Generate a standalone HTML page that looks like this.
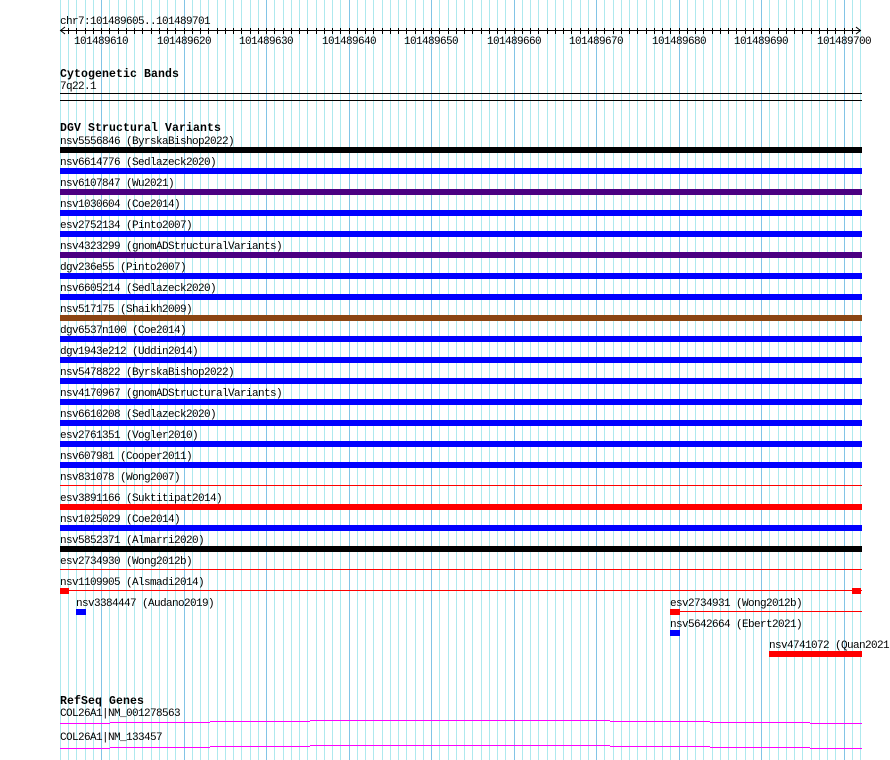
<!DOCTYPE html>
<html><head><meta charset="utf-8"><style>
html,body{margin:0;padding:0;background:#fff;width:890px;height:760px;overflow:hidden}
svg{display:block}
text{font-family:"Liberation Mono",monospace;font-size:11px;letter-spacing:-0.6px;fill:#000}
.b{font-weight:bold;font-size:11.5px;letter-spacing:0.1px}
</style></head><body>
<svg width="890" height="760" viewBox="0 0 890 760" shape-rendering="crispEdges">
<path stroke="#aee9ee" stroke-width="1" fill="none" d="M60.5 0v760M68.5 0v760M76.5 0v760M85.5 0v760M93.5 0v760M109.5 0v760M118.5 0v760M126.5 0v760M134.5 0v760M142.5 0v760M151.5 0v760M159.5 0v760M167.5 0v760M175.5 0v760M192.5 0v760M200.5 0v760M208.5 0v760M217.5 0v760M225.5 0v760M233.5 0v760M241.5 0v760M250.5 0v760M258.5 0v760M274.5 0v760M283.5 0v760M291.5 0v760M299.5 0v760M307.5 0v760M316.5 0v760M324.5 0v760M332.5 0v760M340.5 0v760M357.5 0v760M365.5 0v760M373.5 0v760M382.5 0v760M390.5 0v760M398.5 0v760M406.5 0v760M415.5 0v760M423.5 0v760M439.5 0v760M448.5 0v760M456.5 0v760M464.5 0v760M472.5 0v760M481.5 0v760M489.5 0v760M497.5 0v760M505.5 0v760M522.5 0v760M530.5 0v760M538.5 0v760M547.5 0v760M555.5 0v760M563.5 0v760M571.5 0v760M580.5 0v760M588.5 0v760M604.5 0v760M613.5 0v760M621.5 0v760M629.5 0v760M637.5 0v760M646.5 0v760M654.5 0v760M662.5 0v760M670.5 0v760M687.5 0v760M695.5 0v760M703.5 0v760M712.5 0v760M720.5 0v760M728.5 0v760M736.5 0v760M745.5 0v760M753.5 0v760M769.5 0v760M778.5 0v760M786.5 0v760M794.5 0v760M802.5 0v760M811.5 0v760M819.5 0v760M827.5 0v760M835.5 0v760M852.5 0v760M860.5 0v760"/>
<path stroke="#82c4e6" stroke-width="1" fill="none" d="M101.5 0v760M184.5 0v760M266.5 0v760M349.5 0v760M431.5 0v760M514.5 0v760M596.5 0v760M679.5 0v760M761.5 0v760M844.5 0v760"/>

<text x="60" y="24">chr7:101489605..101489701</text>
<rect x="60" y="30" width="801" height="1" fill="#000"/>
<path stroke="#000" stroke-width="1" fill="none" d="M68.5 28v6M76.5 28v6M85.5 28v6M93.5 28v6M101.5 28v6M109.5 28v6M118.5 28v6M126.5 28v6M134.5 28v6M142.5 28v6M151.5 28v6M159.5 28v6M167.5 28v6M175.5 28v6M184.5 28v6M192.5 28v6M200.5 28v6M208.5 28v6M217.5 28v6M225.5 28v6M233.5 28v6M241.5 28v6M250.5 28v6M258.5 28v6M266.5 28v6M274.5 28v6M283.5 28v6M291.5 28v6M299.5 28v6M307.5 28v6M316.5 28v6M324.5 28v6M332.5 28v6M340.5 28v6M349.5 28v6M357.5 28v6M365.5 28v6M373.5 28v6M382.5 28v6M390.5 28v6M398.5 28v6M406.5 28v6M415.5 28v6M423.5 28v6M431.5 28v6M439.5 28v6M448.5 28v6M456.5 28v6M464.5 28v6M472.5 28v6M481.5 28v6M489.5 28v6M497.5 28v6M505.5 28v6M514.5 28v6M522.5 28v6M530.5 28v6M538.5 28v6M547.5 28v6M555.5 28v6M563.5 28v6M571.5 28v6M580.5 28v6M588.5 28v6M596.5 28v6M604.5 28v6M613.5 28v6M621.5 28v6M629.5 28v6M637.5 28v6M646.5 28v6M654.5 28v6M662.5 28v6M670.5 28v6M679.5 28v6M687.5 28v6M695.5 28v6M703.5 28v6M712.5 28v6M720.5 28v6M728.5 28v6M736.5 28v6M745.5 28v6M753.5 28v6M761.5 28v6M769.5 28v6M778.5 28v6M786.5 28v6M794.5 28v6M802.5 28v6M811.5 28v6M819.5 28v6M827.5 28v6M835.5 28v6M844.5 28v6M852.5 28v6"/>
<path d="M65 27 L60.5 30.5 L65 34 M856 27 L860.5 30.5 L856 34" stroke="#000" fill="none" shape-rendering="auto"/>
<g>
<text x="74" y="44">101489610</text>
<text x="157" y="44">101489620</text>
<text x="239" y="44">101489630</text>
<text x="322" y="44">101489640</text>
<text x="404" y="44">101489650</text>
<text x="487" y="44">101489660</text>
<text x="569" y="44">101489670</text>
<text x="652" y="44">101489680</text>
<text x="734" y="44">101489690</text>
<text x="817" y="44">101489700</text>
</g>

<text class="b" x="60" y="77">Cytogenetic Bands</text>
<text x="60" y="89">7q22.1</text>
<rect x="60" y="93" width="802" height="1" fill="#000"/>
<rect x="60" y="100" width="802" height="1" fill="#000"/>

<text class="b" x="60" y="131">DGV Structural Variants</text>
<text x="60" y="144">nsv5556846 (ByrskaBishop2022)</text><rect x="60" y="147" width="802" height="6" fill="#000"/>
<text x="60" y="165">nsv6614776 (Sedlazeck2020)</text><rect x="60" y="168" width="802" height="6" fill="#0000ff"/>
<text x="60" y="186">nsv6107847 (Wu2021)</text><rect x="60" y="189" width="802" height="6" fill="#4b0082"/>
<text x="60" y="207">nsv1030604 (Coe2014)</text><rect x="60" y="210" width="802" height="6" fill="#0000ff"/>
<text x="60" y="228">esv2752134 (Pinto2007)</text><rect x="60" y="231" width="802" height="6" fill="#0000ff"/>
<text x="60" y="249">nsv4323299 (gnomADStructuralVariants)</text><rect x="60" y="252" width="802" height="6" fill="#4b0082"/>
<text x="60" y="270">dgv236e55 (Pinto2007)</text><rect x="60" y="273" width="802" height="6" fill="#0000ff"/>
<text x="60" y="291">nsv6605214 (Sedlazeck2020)</text><rect x="60" y="294" width="802" height="6" fill="#0000ff"/>
<text x="60" y="312">nsv517175 (Shaikh2009)</text><rect x="60" y="315" width="802" height="6" fill="#8b4513"/>
<text x="60" y="333">dgv6537n100 (Coe2014)</text><rect x="60" y="336" width="802" height="6" fill="#0000ff"/>
<text x="60" y="354">dgv1943e212 (Uddin2014)</text><rect x="60" y="357" width="802" height="6" fill="#0000ff"/>
<text x="60" y="375">nsv5478822 (ByrskaBishop2022)</text><rect x="60" y="378" width="802" height="6" fill="#0000ff"/>
<text x="60" y="396">nsv4170967 (gnomADStructuralVariants)</text><rect x="60" y="399" width="802" height="6" fill="#0000ff"/>
<text x="60" y="417">nsv6610208 (Sedlazeck2020)</text><rect x="60" y="420" width="802" height="6" fill="#0000ff"/>
<text x="60" y="438">esv2761351 (Vogler2010)</text><rect x="60" y="441" width="802" height="6" fill="#0000ff"/>
<text x="60" y="459">nsv607981 (Cooper2011)</text><rect x="60" y="462" width="802" height="6" fill="#0000ff"/>
<text x="60" y="480">nsv831078 (Wong2007)</text><rect x="60" y="485" width="802" height="1" fill="#ff0000"/>
<text x="60" y="501">esv3891166 (Suktitipat2014)</text><rect x="60" y="504" width="802" height="6" fill="#ff0000"/>
<text x="60" y="522">nsv1025029 (Coe2014)</text><rect x="60" y="525" width="802" height="6" fill="#0000ff"/>
<text x="60" y="543">nsv5852371 (Almarri2020)</text><rect x="60" y="546" width="802" height="6" fill="#000"/>
<text x="60" y="564">esv2734930 (Wong2012b)</text><rect x="60" y="569" width="802" height="1" fill="#ff0000"/>
<text x="60" y="585">nsv1109905 (Alsmadi2014)</text><rect x="60" y="590" width="802" height="1" fill="#ff0000"/><rect x="60" y="588" width="9" height="6" fill="#ff0000"/><rect x="852" y="588" width="9" height="6" fill="#ff0000"/>

<text x="76" y="606">nsv3384447 (Audano2019)</text><rect x="76" y="609" width="10" height="6" fill="#0000ff"/>
<text x="670" y="606">esv2734931 (Wong2012b)</text><rect x="670" y="609" width="10" height="6" fill="#ff0000"/><rect x="680" y="611" width="182" height="1" fill="#ff0000"/>
<text x="670" y="627">nsv5642664 (Ebert2021)</text><rect x="670" y="630" width="10" height="6" fill="#0000ff"/>
<text x="769" y="648">nsv4741072 (Quan2021)</text><rect x="769" y="651" width="93" height="6" fill="#ff0000"/>

<text class="b" x="60" y="704">RefSeq Genes</text>
<text x="60" y="716">COL26A1|NM_001278563</text>
<g fill="#ff00ff">
<rect x="60" y="723" width="50" height="1"/><rect x="110" y="722" width="100" height="1"/><rect x="210" y="721" width="100" height="1"/><rect x="310" y="720" width="300" height="1"/><rect x="610" y="721" width="100" height="1"/><rect x="710" y="722" width="100" height="1"/><rect x="810" y="723" width="52" height="1"/>
</g>
<text x="60" y="740">COL26A1|NM_133457</text>
<g fill="#ff00ff">
<rect x="60" y="748" width="50" height="1"/><rect x="110" y="747" width="100" height="1"/><rect x="210" y="746" width="100" height="1"/><rect x="310" y="745" width="300" height="1"/><rect x="610" y="746" width="100" height="1"/><rect x="710" y="747" width="100" height="1"/><rect x="810" y="748" width="52" height="1"/>
</g>
</svg>
</body></html>
